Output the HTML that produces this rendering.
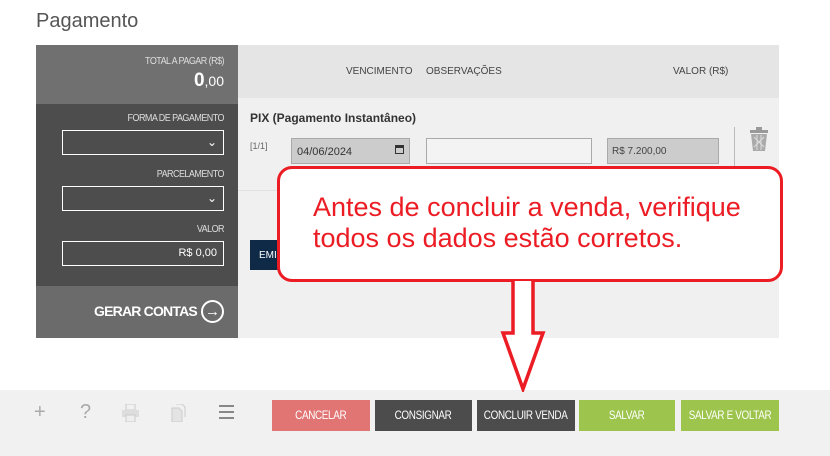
<!DOCTYPE html>
<html><head><meta charset="utf-8"><style>
*{box-sizing:border-box;margin:0;padding:0}
body{width:830px;height:456px;background:#fff;position:relative;overflow:hidden;font-family:"Liberation Sans",sans-serif;}
.a{position:absolute}
.lbl{color:#ddd;font-size:10px;letter-spacing:-0.6px;text-align:right;right:0;transform:scaleX(.9);transform-origin:right}
.sel{border:1px solid #fff;height:25px;width:162px;left:62px}
.btn{top:400px;height:31px;color:#fff;font-size:11.5px;display:flex;align-items:center;justify-content:center;letter-spacing:-0.4px}
.btn span{display:inline-block;transform:scaleX(.86);white-space:nowrap}
.ic{color:#aaa;font-size:20px;top:400px}
</style></head><body>
<div class="a" style="left:36px;top:10px;font-size:20px;color:#555">Pagamento</div>

<div class="a" style="left:36px;top:45px;width:202px;height:59px;background:#707070"></div>
<div class="a" style="left:36px;top:104px;width:202px;height:182px;background:#4d4d4d"></div>
<div class="a" style="left:36px;top:286px;width:202px;height:52px;background:#6b6b6b"></div>
<div class="a lbl" style="left:36px;width:188px;top:56px;position:absolute">TOTAL A PAGAR (R$)</div>
<div class="a" style="left:36px;width:188px;top:70px;text-align:right;color:#fff;font-size:19px;font-weight:bold">0<span style="font-size:14px;font-weight:normal">,00</span></div>
<div class="a lbl" style="left:36px;width:188px;top:113px">FORMA DE PAGAMENTO</div>
<div class="a sel" style="top:130px"><span class="a" style="right:6px;top:4px;color:#fff;font-size:12px">&#8964;</span></div>
<div class="a lbl" style="left:36px;width:188px;top:169px">PARCELAMENTO</div>
<div class="a sel" style="top:186px"><span class="a" style="right:6px;top:4px;color:#fff;font-size:12px">&#8964;</span></div>
<div class="a lbl" style="left:36px;width:188px;top:224px">VALOR</div>
<div class="a sel" style="top:241px;color:#fff;font-size:11px;text-align:right;padding:5px 6px 0 0">R$ 0,00</div>
<div class="a" style="left:94px;top:303px;color:#fff;font-weight:bold;font-size:14px;letter-spacing:-0.8px">GERAR CONTAS</div>
<div class="a" style="left:201px;top:300px;width:23px;height:23px;border:2px solid #fff;border-radius:50%;color:#fff;font-size:15px;font-weight:bold;text-align:center;line-height:19px">&#8594;</div>

<div class="a" style="left:238px;top:45px;width:541px;height:293px;background:#f0f0f0"></div>
<div class="a" style="left:238px;top:45px;width:541px;height:53px;background:#e5e5e5"></div>
<div class="a" style="left:346px;top:66px;font-size:10px;color:#444">VENCIMENTO</div>
<div class="a" style="left:426px;top:66px;font-size:10px;color:#444">OBSERVAÇÕES</div>
<div class="a" style="left:673px;top:66px;font-size:10px;color:#444">VALOR (R$)</div>
<div class="a" style="left:250px;top:111px;font-size:12px;font-weight:bold;color:#333">PIX (Pagamento Instantâneo)</div>
<div class="a" style="left:250px;top:141px;font-size:9px;color:#666">[1/1]</div>
<div class="a" style="left:291px;top:138px;width:119px;height:26px;background:#ccc;border:1px solid #aaa;font-size:11px;color:#333;padding:7px 0 0 5px">04/06/2024<span class="a" style="right:5px;top:6px;width:9px;height:9px;border:1.5px solid #333;border-top-width:3px"></span></div>
<div class="a" style="left:426px;top:138px;width:166px;height:26px;background:#f3f3f3;border:1px solid #aaa"></div>
<div class="a" style="left:607px;top:138px;width:112px;height:26px;background:#ccc;border:1px solid #aaa;font-size:10px;color:#444;padding:7px 0 0 4px">R$ 7.200,00</div>
<div class="a" style="left:734px;top:127px;width:1px;height:60px;background:#bbb"></div>
<svg class="a" style="left:748px;top:127px" width="22" height="26"><rect x="2" y="3" width="18" height="3" fill="#999"/><rect x="8" y="0" width="6" height="4" fill="#999"/><path d="M3 7h16l-2 17H5z" fill="#aaa"/><path d="M6 10l10 10M16 10L6 20M9 8v15M13 8v15" stroke="#ddd" stroke-width="1"/></svg>
<div class="a" style="left:238px;top:190px;width:541px;height:1px;background:#e2e2e2"></div>
<div class="a" style="left:250px;top:240px;width:40px;height:30px;background:#0e2a47;color:#fff;font-size:10px;padding:10px 0 0 9px">EMI</div>

<div class="a" style="left:0;top:390px;width:830px;height:66px;background:#f1f1f1"></div>
<div class="a ic" style="left:34px;top:401px">+</div>
<div class="a ic" style="left:80px;top:401px">?</div>
<svg class="a" style="left:122px;top:404px" width="17" height="18"><rect x="4" y="0" width="9" height="6" fill="none" stroke="#ccc"/><rect x="0" y="6" width="17" height="7" fill="#ddd"/><rect x="4" y="11" width="9" height="7" fill="#eee" stroke="#ccc"/></svg>
<svg class="a" style="left:171px;top:404px" width="15" height="18"><path d="M1 4h7l3 3v11H1z" fill="#e4e4e4" stroke="#ccc"/><path d="M5 0h6l3 3v10" fill="none" stroke="#ccc"/></svg>
<div class="a" style="left:219px;top:405px;width:15px;height:2px;background:#888;box-shadow:0 6px 0 #888,0 12px 0 #888"></div>
<div class="a btn" style="left:272px;width:98px;background:#e07574"><span>CANCELAR</span></div>
<div class="a btn" style="left:375px;width:97px;background:#4c4c4c"><span>CONSIGNAR</span></div>
<div class="a btn" style="left:477px;width:98px;background:#4c4c4c"><span>CONCLUIR VENDA</span></div>
<div class="a btn" style="left:579px;width:96px;background:#9dc44d"><span>SALVAR</span></div>
<div class="a btn" style="left:681px;width:98px;background:#9dc44d"><span>SALVAR E VOLTAR</span></div>

<div class="a" style="left:277px;top:166px;width:506px;height:116px;background:#fff;border:3.5px solid #ec1c24;border-radius:15px"></div>
<div class="a" style="left:313px;top:192px;font-size:27px;line-height:31px;color:#ec1c24;white-space:nowrap">Antes de concluir a venda, verifique<br>todos os dados estão corretos.</div>
<svg class="a" style="left:500px;top:280px" width="46" height="112"><path d="M13 1V53H3L23 109L43 53H33V1" fill="#fff" stroke="#ec1c24" stroke-width="3.5"/></svg>
</body></html>
